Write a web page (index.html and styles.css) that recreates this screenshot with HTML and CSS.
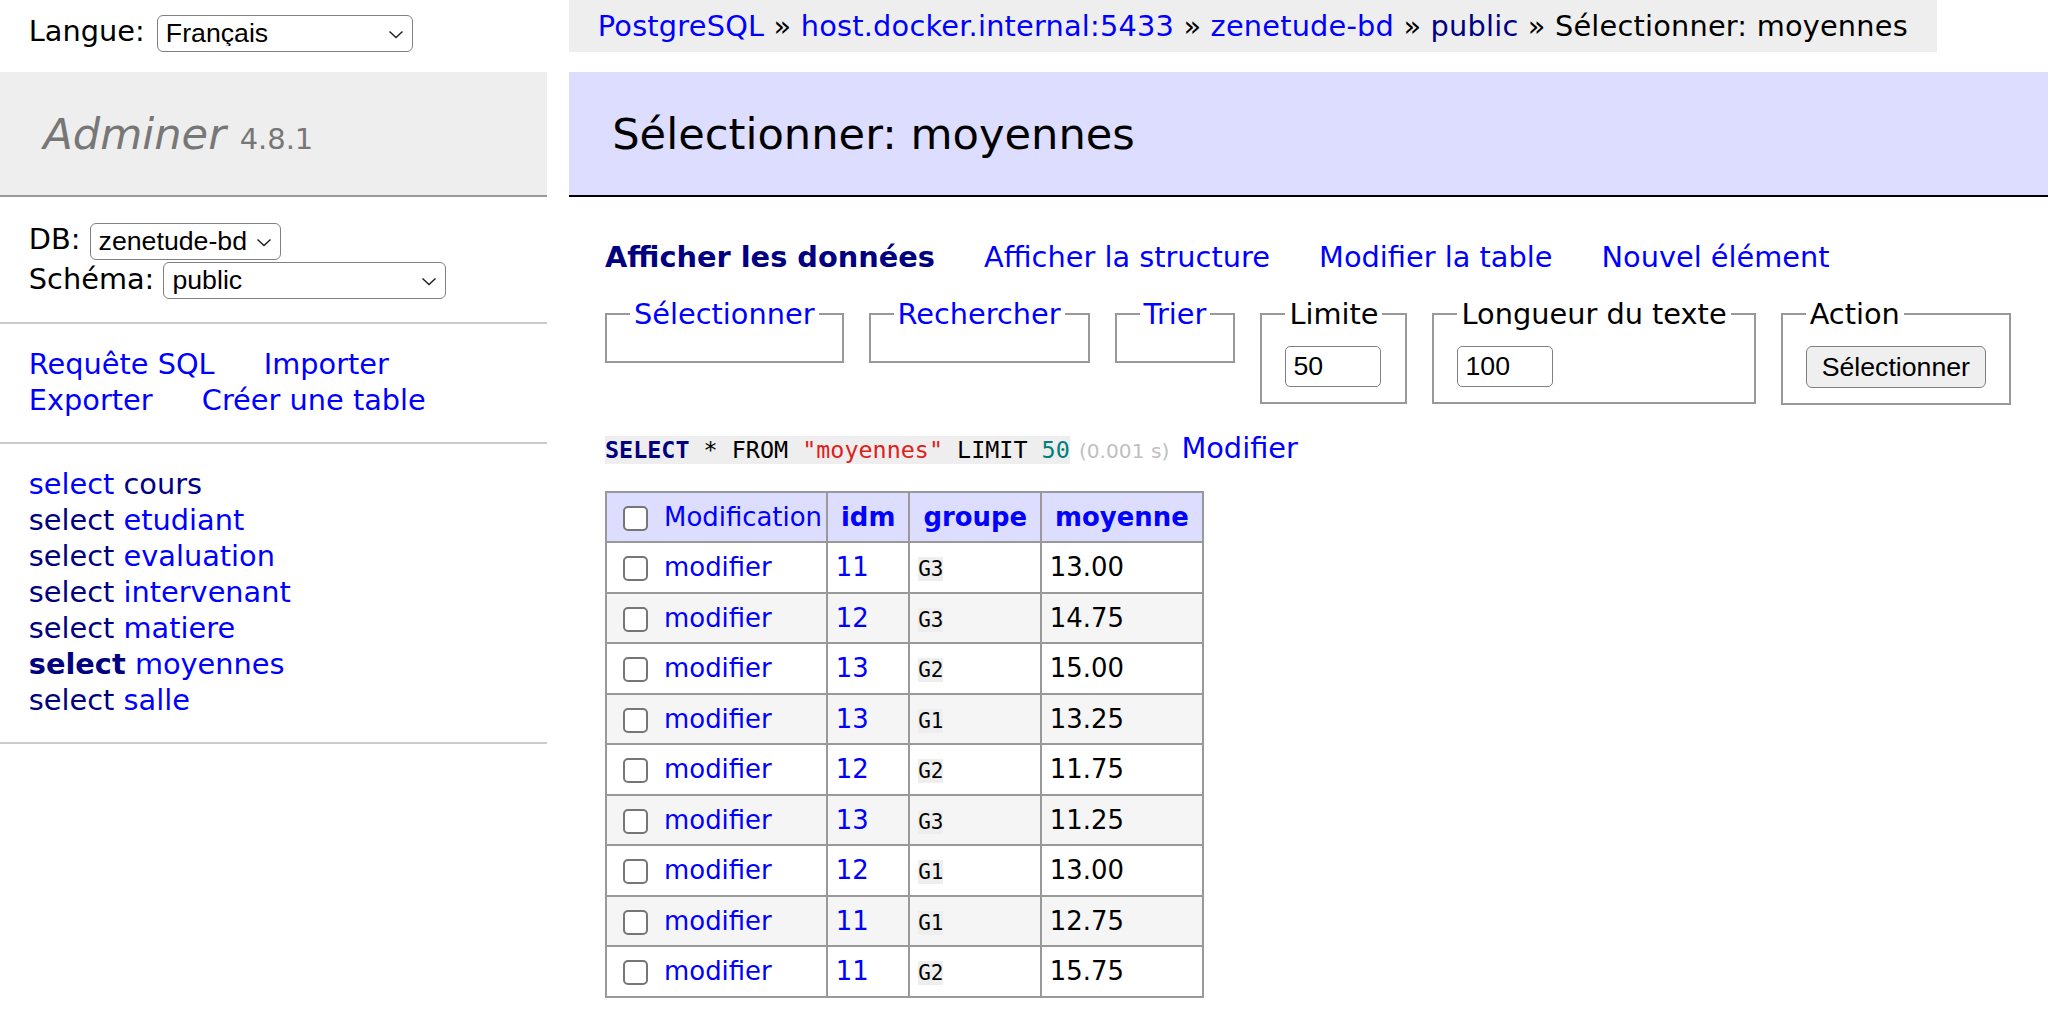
FILE: index.html
```html
<!DOCTYPE html>
<html lang="fr">
<head>
<meta charset="utf-8">
<title>Sélectionner: moyennes - Adminer</title>
<link rel="stylesheet" href="styles.css">
</head>
<body>
<div class="page">
  <aside class="side">
    <div class="lang">Langue: <span class="sel-wrap"><select class="sel sel-lang"><option>Français</option></select><svg class="chev" width="16" height="9" viewBox="0 0 16 9"><path d="M1.5 1.5l6.5 6 6.5-6" fill="none" stroke="#222" stroke-width="1.5"/></svg></span></div>
    <div class="menu">
      <h1 class="brand"><a href="#" class="brand-link">Adminer</a> <span class="version">4.8.1</span></h1>
      <p class="menu-block dbs">DB: <span class="sel-wrap"><select class="sel sel-db"><option>zenetude-bd</option></select><svg class="chev" width="16" height="9" viewBox="0 0 16 9"><path d="M1.5 1.5l6.5 6 6.5-6" fill="none" stroke="#222" stroke-width="1.5"/></svg></span><br>Schéma: <span class="sel-wrap"><select class="sel sel-schema"><option>public</option></select><svg class="chev" width="16" height="9" viewBox="0 0 16 9"><path d="M1.5 1.5l6.5 6 6.5-6" fill="none" stroke="#222" stroke-width="1.5"/></svg></span></p>
      <p class="menu-block links"><a href="#">Requête SQL</a> <a href="#">Importer</a><br><a href="#">Exporter</a> <a href="#">Créer une table</a></p>
      <ul class="menu-block tables">
        <li><a href="#">select</a> <a href="#" class="visited">cours</a></li>
        <li><a href="#" class="visited">select</a> <a href="#">etudiant</a></li>
        <li><a href="#" class="visited">select</a> <a href="#">evaluation</a></li>
        <li><a href="#" class="visited">select</a> <a href="#">intervenant</a></li>
        <li><a href="#" class="visited">select</a> <a href="#">matiere</a></li>
        <li><a href="#" class="visited active">select</a> <a href="#">moyennes</a></li>
        <li><a href="#" class="visited">select</a> <a href="#">salle</a></li>
      </ul>
    </div>
  </aside>
  <main class="main">
    <p class="breadcrumb"><a href="#">PostgreSQL</a> » <a href="#">host.docker.internal:5433</a> » <a href="#">zenetude-bd</a> » <a href="#" class="visited">public</a> » Sélectionner: moyennes</p>
    <div class="content">
      <h2 class="title">Sélectionner: moyennes</h2>
      <p class="links nav"><a href="#" class="visited active">Afficher les données</a> <a href="#">Afficher la structure</a> <a href="#">Modifier la table</a> <a href="#">Nouvel élément</a></p>
      <form class="filters">
        <fieldset><legend><a href="#">Sélectionner</a></legend></fieldset>
        <fieldset><legend><a href="#">Rechercher</a></legend></fieldset>
        <fieldset><legend><a href="#">Trier</a></legend></fieldset>
        <fieldset><legend>Limite</legend><input class="num" type="text" value="50"></fieldset>
        <fieldset><legend>Longueur du texte</legend><input class="num" type="text" value="100"></fieldset>
        <fieldset><legend>Action</legend><button type="button" class="btn">Sélectionner</button></fieldset>
      </form>
      <p class="sql"><code class="jush"><span class="kw">SELECT</span> * FROM <span class="quo">"moyennes"</span> LIMIT <span class="num-lit">50</span></code> <span class="time">(0.001 s)</span> <a href="#">Modifier</a></p>
      <table class="data">
        <thead>
          <tr>
            <td><input type="checkbox" class="cb"> <a href="#">Modification</a></td>
            <th><a href="#">idm</a></th>
            <th><a href="#">groupe</a></th>
            <th><a href="#">moyenne</a></th>
          </tr>
        </thead>
        <tbody>
          <tr><td><input type="checkbox" class="cb"> <a href="#">modifier</a></td><td><a href="#">11</a></td><td><code class="g">G3</code></td><td>13.00</td></tr>
          <tr><td><input type="checkbox" class="cb"> <a href="#">modifier</a></td><td><a href="#">12</a></td><td><code class="g">G3</code></td><td>14.75</td></tr>
          <tr><td><input type="checkbox" class="cb"> <a href="#">modifier</a></td><td><a href="#">13</a></td><td><code class="g">G2</code></td><td>15.00</td></tr>
          <tr><td><input type="checkbox" class="cb"> <a href="#">modifier</a></td><td><a href="#">13</a></td><td><code class="g">G1</code></td><td>13.25</td></tr>
          <tr><td><input type="checkbox" class="cb"> <a href="#">modifier</a></td><td><a href="#">12</a></td><td><code class="g">G2</code></td><td>11.75</td></tr>
          <tr><td><input type="checkbox" class="cb"> <a href="#">modifier</a></td><td><a href="#">13</a></td><td><code class="g">G3</code></td><td>11.25</td></tr>
          <tr><td><input type="checkbox" class="cb"> <a href="#">modifier</a></td><td><a href="#">12</a></td><td><code class="g">G1</code></td><td>13.00</td></tr>
          <tr><td><input type="checkbox" class="cb"> <a href="#">modifier</a></td><td><a href="#">11</a></td><td><code class="g">G1</code></td><td>12.75</td></tr>
          <tr><td><input type="checkbox" class="cb"> <a href="#">modifier</a></td><td><a href="#">11</a></td><td><code class="g">G2</code></td><td>15.75</td></tr>
        </tbody>
      </table>
    </div>
  </main>
</div>
</body>
</html>
```
FILE: styles.css
```css
html, body {
  margin: 0;
  padding: 0;
  background: #fff;
}
body {
  font: 28.8px/1.25 "DejaVu Sans", Verdana, sans-serif;
  color: #000;
  overflow: hidden;
  width: 2048px;
}
a {
  color: #00f;
  text-decoration: none;
}
a.visited {
  color: #000080;
}
.active {
  font-weight: bold;
}

.page {
  display: grid;
  grid-template-columns: 547px 1fr;
  column-gap: 22px;
}

/* left column */
.lang {
  height: 72px;
  padding: 6px 28.8px 0;
  line-height: 51.8px;
  white-space: nowrap;
  box-sizing: border-box;
}
.sel-wrap {
  position: relative;
  display: inline-block;
  vertical-align: middle;
  line-height: 0;
}
.sel {
  appearance: none;
  -webkit-appearance: none;
  font: 26.7px/1 "Liberation Sans", Arial, sans-serif;
  color: #000;
  height: 37px;
  border: 1.5px solid #808080;
  border-radius: 6px;
  background: #fff;
  padding: 0 30px 0 8px;
  margin: 0;
  box-sizing: border-box;
}
.sel-lang { width: 256px; }
.sel-db { width: 191px; }
.sel-schema { width: 283px; }
.lang .sel-wrap { margin-left: 3px; }
.chev {
  position: absolute;
  right: 9px;
  top: 15px;
  pointer-events: none;
}

.brand {
  margin: 0;
  height: 125px;
  box-sizing: border-box;
  font-size: 43.2px;
  line-height: 54px;
  font-weight: normal;
  padding: 34.56px 43.2px;
  background: #eee;
  border-bottom: 2px solid #999;
  color: #777;
  white-space: nowrap;
  overflow: hidden;
}
.brand-link {
  color: #777;
  font-style: italic;
}
.version {
  font-size: 67%;
  line-height: 1;
  color: #777;
}
.menu-block {
  margin: 0;
  padding: 23px 28.8px;
  border-bottom: 2px solid #ccc;
}
.dbs {
  line-height: 39px;
  white-space: nowrap;
}
.links a {
  margin-right: 40px;
  white-space: nowrap;
}
.tables {
  list-style: none;
  white-space: nowrap;
}

/* right column */
.main {
  min-width: 0;
}
.breadcrumb {
  display: inline-block;
  margin: 0;
  background: #eee;
  height: 52px;
  line-height: 52px;
  padding: 0 28.8px;
  white-space: nowrap;
  vertical-align: top;
  letter-spacing: 0.2px;
}
.content {
  padding: 20px 0 0 36px;
}
.title {
  margin: 0 0 43px -36px;
  height: 125px;
  box-sizing: border-box;
  font-size: 43.2px;
  line-height: 54px;
  font-weight: normal;
  padding: 34.56px 43.2px;
  background: #ddf;
  border-bottom: 2px solid #000;
  color: #000;
}
.nav {
  margin: 0;
  white-space: nowrap;
}
.filters {
  display: flex;
  align-items: flex-start;
  gap: 25px;
  margin: 20px 0 0;
}
.filters fieldset {
  margin: 0;
  padding: 14.4px 23px;
  border: 2px solid #999;
  min-width: 0;
}
.filters legend {
  padding: 0 4px;
  line-height: 36px;
  white-space: nowrap;
}
.num {
  display: block;
  width: 96px;
  height: 41px;
  box-sizing: border-box;
  font: 26.7px/1 "Liberation Sans", Arial, sans-serif;
  color: #000;
  border: 1.5px solid #808080;
  border-radius: 5px;
  padding: 0 7px;
  margin: 0;
  background: #fff;
}
.btn {
  display: block;
  height: 42px;
  box-sizing: border-box;
  font: 26.7px/1 "Liberation Sans", Arial, sans-serif;
  color: #000;
  background: #efefef;
  border: 1.5px solid #808080;
  border-radius: 6px;
  padding: 0 15px;
  margin: 0;
}

.sql {
  margin: 26px 0 0;
  white-space: nowrap;
}
.jush {
  font: 23.4px "DejaVu Sans Mono", "Liberation Mono", monospace;
  background: #eee;
}
.kw {
  color: #000080;
  font-weight: bold;
}
.quo {
  color: #e0201a;
}
.num-lit {
  color: #007f7f;
}
.time {
  color: silver;
  font-size: 70%;
  margin-right: 3px;
}

.data {
  border-collapse: collapse;
  font-size: 25.92px;
  margin: 24px 0 0;
}
.data td,
.data th {
  border: 2px solid #999;
  padding: 0 7.8px;
  height: 48.5px;
  vertical-align: middle;
  text-align: left;
  white-space: nowrap;
}
.data td:first-child {
  padding-right: 4px;
}
.data th {
  padding: 0 13px;
  text-align: center;
  font-weight: bold;
}
.data thead td,
.data thead th {
  background: #ddf;
}
.data tbody tr:nth-child(2n) {
  background: #f5f5f5;
}
.cb {
  appearance: none;
  -webkit-appearance: none;
  width: 25px;
  height: 25px;
  box-sizing: border-box;
  border: 2px solid #767676;
  border-radius: 5px;
  background: #fff;
  margin: 0 8px 0 8px;
  vertical-align: middle;
}
.g {
  font: 21px "DejaVu Sans Mono", "Liberation Mono", monospace;
  background: #eee;
}
```
